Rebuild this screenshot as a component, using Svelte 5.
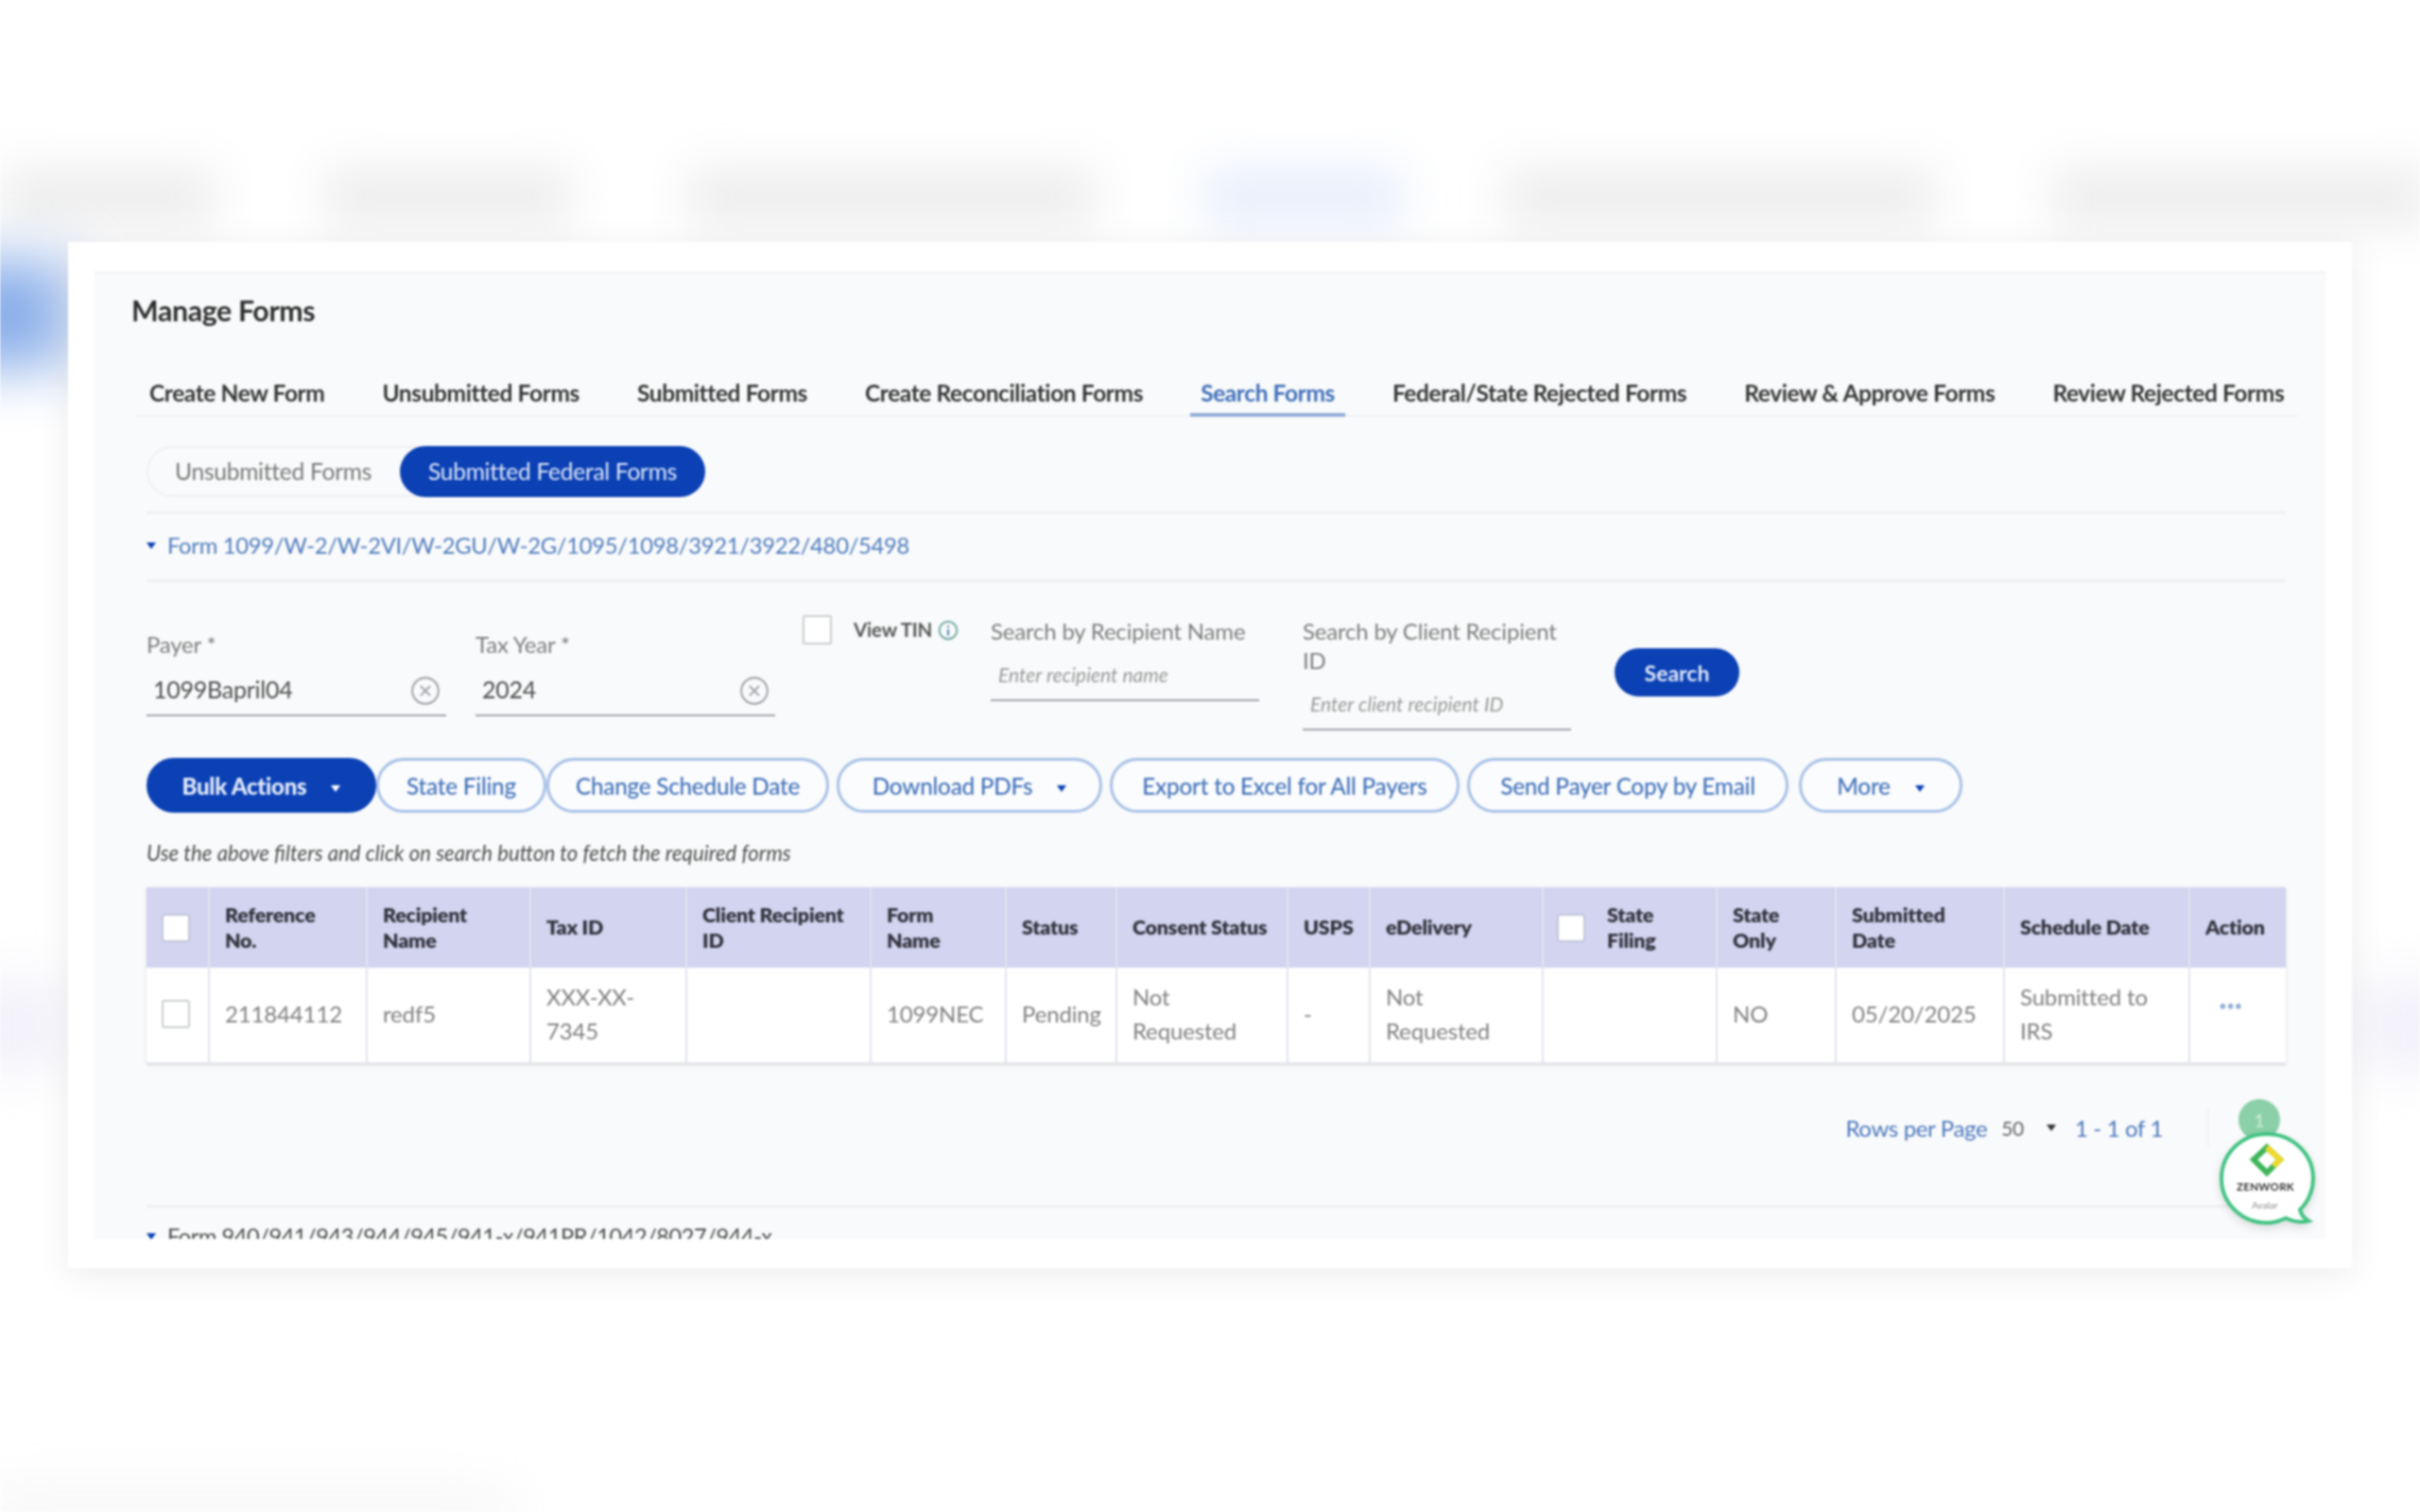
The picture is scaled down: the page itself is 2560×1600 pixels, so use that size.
<script>
  const tabs = ['Create New Form','Unsubmitted Forms','Submitted Forms','Create Reconciliation Forms','Search Forms','Federal/State Rejected Forms','Review & Approve Forms','Review Rejected Forms'];
  const head = [[],['Reference','No.'],['Recipient','Name'],['Tax ID'],['Client Recipient','ID'],['Form','Name'],['Status'],['Consent Status'],['USPS'],['eDelivery'],['State','Filing'],['State','Only'],['Submitted','Date'],['Schedule Date'],['Action']];
  const row = [[],['211844112'],['redf5'],['XXX-XX-','7345'],[],['1099NEC'],['Pending'],['Not','Requested'],['-'],['Not','Requested'],[],['NO'],['05/20/2025'],['Submitted to','IRS'],['•••']];
  const blobs = [0, 1, 2, 3, 4, 5];
</script>

<div class="page">
  <div class="backdrop">
    {#each blobs as b}
      <span class="blob" class:blue={b === 3}></span>
    {/each}
  </div>
  <div class="side side-a"></div>
  <div class="side side-b"></div>
  <div class="side side-c"></div>
  <div class="side side-d"></div>

  <main class="card">
    <section class="panel">
      <h1>Manage Forms</h1>
      <nav class="tabs">
        {#each tabs as t, i}
          <span class="tab" class:active={i === 4}>{t}</span>
        {/each}
      </nav>

      <div class="toggle">
        <span class="off">Unsubmitted Forms</span>
        <span class="on">Submitted Federal Forms</span>
      </div>

      <div class="rule r1"></div>
      <div class="acc"><i class="caret small"></i><span>Form 1099/W-2/W-2VI/W-2GU/W-2G/1095/1098/3921/3922/480/5498</span></div>
      <div class="rule"></div>

      <div class="filters">
        <div class="field payer">
          <label>Payer *</label>
          <div class="val"><span>1099Bapril04</span>
            <svg width="32" height="32" viewBox="0 0 22 22"><circle cx="11" cy="11" r="9.5" fill="none" stroke="#9a9ea3" stroke-width="1.3"/><path d="M7.5 7.5l7 7M14.5 7.5l-7 7" stroke="#9a9ea3" stroke-width="1.3"/></svg>
          </div>
        </div>
        <div class="field year">
          <label>Tax Year *</label>
          <div class="val"><span>2024</span>
            <svg width="32" height="32" viewBox="0 0 22 22"><circle cx="11" cy="11" r="9.5" fill="none" stroke="#9a9ea3" stroke-width="1.3"/><path d="M7.5 7.5l7 7M14.5 7.5l-7 7" stroke="#9a9ea3" stroke-width="1.3"/></svg>
          </div>
        </div>
        <div class="tin">
          <span class="box"></span>
          <b>View TIN</b>
          <svg width="24" height="24" viewBox="0 0 22 22"><circle cx="11" cy="11" r="8.5" fill="none" stroke="#6fa8a0" stroke-width="1.8"/><path d="M11 6.5v1.8M11 10v6" stroke="#4d7fb8" stroke-width="1.8"/></svg>
        </div>
        <div class="search s1">
          <label>Search by Recipient Name</label>
          <div class="ph">Enter recipient name</div>
        </div>
        <div class="search s2">
          <label>Search by Client Recipient ID</label>
          <div class="ph">Enter client recipient ID</div>
        </div>
        <button class="go">Search</button>
      </div>

      <div class="actions">
        <button class="btn bulk">Bulk Actions<i class="caret white"></i></button>
        <button class="btn w180">State Filing</button>
        <button class="btn w299">Change Schedule Date</button>
        <button class="btn w281 gapl">Download PDFs<i class="caret"></i></button>
        <button class="btn w370 gapl">Export to Excel for All Payers</button>
        <button class="btn w340 gapl">Send Payer Copy by Email</button>
        <button class="btn w173 gapm">More<i class="caret"></i></button>
      </div>

      <p class="hint">Use the above filters and click on search button to fetch the required forms</p>

      <div class="table">
        {#each head as h, i}
          <div class="th" class:center={i === 0}>
            {#if i === 0 || i === 10}<span class="cb white" class:mr={i === 10}></span>{/if}
            {#if h.length}<span class="lines">{#each h as l}<span>{l}</span>{/each}</span>{/if}
          </div>
        {/each}
        {#each row as c, i}
          <div class="td" class:center={i === 0} class:act={i === 14}>
            {#if i === 0}<span class="cb"></span>{:else}<span class="lines">{#each c as l}<span>{l}</span>{/each}</span>{/if}
          </div>
        {/each}
      </div>

      <div class="pager">
        <span class="blue-t">Rows per Page</span>
        <span class="n50">50</span>
        <i class="caret dark"></i>
        <span class="blue-t range">1 - 1 of 1</span>
        <span class="div"></span>
      </div>

      <div class="rule"></div>
      <div class="acc acc2"><i class="caret small"></i><span>Form 940/941/943/944/945/941-x/941PR/1042/8027/944-x</span></div>

      <aside class="widget">
        <span class="count">1</span>
        <svg class="bubble" width="110" height="110" viewBox="0 0 110 110">
          <path d="M54 5C27 5 6 26 6 52s21 47 48 47c8 0 14-2 20-5 6 3 15 5 24 3-5-3-8-7-9-12 9-8 14-21 14-33C103 26 81 5 54 5z" fill="#fff" stroke="#43c383" stroke-width="4"/>
          <path d="M54 19l14 13-14 14-14-14z" fill="none" stroke="#3fb45a" stroke-width="6"/>
          <path d="M54 19l14 13-7 7" fill="none" stroke="#f0d82c" stroke-width="6"/>
        </svg>
        <b class="w1">ZENWORK</b>
        <span class="w2">Avalar</span>
      </aside>
    </section>
  </main>
</div>

<style>
  :global(body) { margin: 0; background: #fff; }
  .page {
    width: 2560px; height: 1600px; position: relative; overflow: hidden;
    font-family: Lato, "Open Sans", sans-serif; color: #444; background: #fff;
    filter: blur(1.2px);
  }
  .backdrop {
    position: absolute; left: 0; top: 178px; width: 2560px; display: flex; height: 62px;
    filter: blur(24px);
  }
  .blob { background: #ededed; height: 62px; flex: none; }
  .blob:nth-child(1) { width: 228px; }
  .blob:nth-child(2) { width: 262px; margin-left: 115px; }
  .blob:nth-child(3) { width: 432px; margin-left: 122px; }
  .blob:nth-child(4) { width: 212px; margin-left: 114px; }
  .blob:nth-child(5) { width: 457px; margin-left: 106px; }
  .blob:nth-child(6) { width: 400px; margin-left: 122px; }
  .blob.blue { background: #e8eefb; }
  .side { position: absolute; filter: blur(30px); }
  .side-a { left: -60px; top: 275px; width: 132px; height: 115px; background: #8aaee9; }
  .side-b { left: -40px; top: 1040px; width: 112px; height: 90px; background: #f1f0f9; }
  .side-c { left: 2488px; top: 1040px; width: 112px; height: 90px; background: #f1f0f9; }
  .side-d { left: -20px; top: 1585px; width: 560px; height: 40px; background: #f3f3f3; }

  .card {
    position: absolute; left: 72px; top: 256px; width: 2416px; height: 1086px; box-sizing: border-box;
    background: #fff; padding: 31px 28px; box-shadow: 0 6px 34px rgba(0,0,0,.08);
  }
  .panel {
    position: relative; height: 1024px; overflow: hidden; box-sizing: border-box;
    background: #f9fafb; border-top: 2px solid #f1f2f3; padding: 0 42px 0 55px;
  }
  h1 { margin: 19px 0 0 -16px; font-size: 30.3px; letter-spacing: -.35px; line-height: 40px; font-weight: 700; color: #2f2f2f; height: 40px; }
  .tabs {
    display: flex; gap: 61px; margin: 44px -13px 0 -12px; padding: 0 15px; height: 49px; box-sizing: border-box;
    border-bottom: 2px solid #f1f2f3; font-size: 24.55px; letter-spacing: -.42px; font-weight: 700; color: #363636; line-height: 48px; white-space: nowrap;
  }
  .tab { position: relative; height: 49px; }
  .tab.active { color: #3f6fb8; }
  .tab.active::after { content: ''; position: absolute; left: -11px; right: -11px; bottom: 0; height: 4px; background: #8fadd8; }

  .toggle {
    margin-top: 31px; width: 591px; height: 54px; box-sizing: border-box; border: 2px solid #eff0f1; border-radius: 27px;
    display: flex; font-size: 24.6px; letter-spacing: -.28px; align-items: stretch;
  }
  .off { width: 268px; padding-left: 28px; box-sizing: border-box; line-height: 50px; color: #777; white-space: nowrap; }
  .on { flex: 1; margin: -2px; background: #0b41b5; color: #dfe7f7; border-radius: 27px; text-align: center; line-height: 54px; white-space: nowrap; }

  .rule { height: 3px; background: #eff0f1; }
  .r1 { margin-top: 15px; }
  .acc { display: flex; align-items: center; height: 69px; box-sizing: border-box; padding-bottom: 3px; color: #4f7cbd; font-size: 23.8px; letter-spacing: -.3px; }
  .acc span { margin-left: 12px; white-space: nowrap; }
  .acc2 { height: 36px; color: #4b4b4b; padding: 24px 0 0; font-size: 23.6px; letter-spacing: -.45px; }

  .caret { display: inline-block; width: 0; height: 0; border-left: 5px solid transparent; border-right: 5px solid transparent; border-top: 7px solid #0b41b5; margin-left: 26px; vertical-align: middle; }
  .caret.small { margin-left: 0; }
  .caret.white { border-top-color: #fff; }
  .caret.dark { border-top-color: #333; margin-left: 0; }

  .filters { display: flex; height: 186px; position: relative; }
  label { display: block; font-size: 24px; letter-spacing: -.2px; color: #7d7d7d; line-height: 30px; }
  .field { flex: none; padding-top: 51px; }
  .payer { width: 317px; margin-right: 31px; }
  .year { width: 317px; margin-right: 29px; }
  .val {
    height: 56px; box-sizing: border-box; display: flex; justify-content: space-between; align-items: center; margin-top: 5px;
    border-bottom: 2px solid #9ea3a8; padding: 0 6px 0 7px; font-size: 25px; letter-spacing: -.25px; color: #4d4d4d;
  }
  .val svg { margin-top: 4px; }
  .tin { flex: none; width: 199px; display: flex; align-items: flex-start; padding-top: 35px; font-size: 20.5px; letter-spacing: -.2px; color: #555; }
  .tin b { margin: 3px 3px 0 23px; line-height: 24px; font-weight: 700; white-space: nowrap; }
  .box { width: 31px; height: 31px; box-sizing: border-box; border: 2.5px solid #c9cbce; background: #fff; border-radius: 2px; flex: none; }
  .tin svg { margin: 4px 0 0 2px; flex: none; }
  .search { flex: none; padding-top: 36px; }
  .search label { line-height: 31px; }
  .s1 { width: 284px; margin-right: 46px; }
  .s2 { width: 284px; margin-right: 46px; }
  .ph { font-style: italic; font-size: 21px; color: #999; padding-left: 8px; line-height: 52px; height: 54px; box-sizing: border-box; border-bottom: 2px solid #9ea3a8; margin-top: 5px; white-space: nowrap; }
  .go {
    margin-top: 70px; width: 132px; height: 51px; border: 0; border-radius: 26px; background: #0b41b5; color: #dfe7f7;
    font: 700 23px Lato, sans-serif; flex: none;
  }

  .actions { display: flex; height: 58px; }
  .btn {
    height: 58px; box-sizing: border-box; border: 3px solid #a6c0e6; background: #fbfcfe; border-radius: 29px; color: #4272b9;
    font: 500 24.3px Lato, sans-serif; letter-spacing: -.25px; flex: none; padding: 0; white-space: nowrap;
  }
  .bulk { width: 243px; background: #0b41b5; border-color: #0b41b5; color: #e6ecf9; font-weight: 900; font-size: 24px; }
  .w180 { width: 180px; } .w299 { width: 299px; } .w281 { width: 281px; } .w370 { width: 370px; } .w340 { width: 340px; } .w173 { width: 173px; }
  .gapl { margin-left: 8px; } .gapm { margin-left: 11px; }

  .hint { margin: 28px 0 0; height: 30px; line-height: 30px; font-size: 22.2px; font-style: italic; color: #4d4d4d; white-space: nowrap; }

  .table {
    margin-top: 21px; display: grid; grid-template-columns: 67px 167px 173px 165px 195px 143px 117px 181px 87px 183px 184px 126px 178px 196px 101px;
    grid-template-rows: 85px 102px; width: 2263px; box-shadow: 0 1px 3px rgba(0,0,0,.14); background: #fff;
  }
  .th, .td { display: flex; align-items: center; box-sizing: border-box; padding-left: 16px; border-right: 2px solid #e2e3f0; white-space: nowrap; }
  .th:nth-child(15), .td:nth-child(30) { border-right: 0; }
  .th { background: #d2d4f0; font-size: 21.5px; letter-spacing: -.25px; font-weight: 800; line-height: 27px; color: #33333d; }
  .td { font-size: 24px; letter-spacing: -.15px; line-height: 36px; color: #808080; padding-right: 8px; padding-bottom: 2px; border-bottom: 2px solid #e4e5ea; }
  .lines { display: flex; flex-direction: column; }
  .center { padding-left: 0; justify-content: center; }
  .th.center .cb { margin-left: -4px; }
  .td.center .cb { margin-left: 4px; }
  .act { color: #8fadd8; align-items: flex-start; padding-top: 22px; padding-left: 30px; font-size: 15px; letter-spacing: -.5px; }
  .cb { width: 30px; height: 30px; box-sizing: border-box; border: 2.5px solid #c9cbce; background: #fff; border-radius: 3px; flex: none; }
  .cb.white { border-color: #c3c5da; }
  .mr { margin-right: 23px; margin-left: -2px; }

  .pager { display: flex; align-items: center; justify-content: flex-end; height: 60px; margin-top: 37px; padding-right: 130px; font-size: 24px; letter-spacing: -.35px; margin-bottom: 52px; white-space: nowrap; }
  .blue-t { color: #4a78bd; }
  .n50 { margin-left: 15px; margin-right: 24px; color: #666; font-size: 21px; }
  .range { margin-left: 20px; }
  .div { display: block; width: 2px; height: 40px; background: #f0f1f2; margin-left: 47px; margin-right: -49px; }

  .widget { position: absolute; left: 2244px; top: 874px; width: 110px; height: 135px; }
  .count { position: absolute; top: 0; left: 24px; width: 44px; height: 44px; border-radius: 50%; background: #8bd0a8; color: #cdeedb; text-align: center; font-size: 20px; line-height: 44px; }
  .bubble { position: absolute; left: 0; top: 32px; filter: drop-shadow(0 4px 5px rgba(0,0,0,.12)); }
  .w1 { position: absolute; left: 22px; top: 86px; font-size: 11.5px; letter-spacing: .3px; color: #333; }
  .w2 { position: absolute; left: 38px; top: 106px; font-size: 10px; color: #888; }
</style>
